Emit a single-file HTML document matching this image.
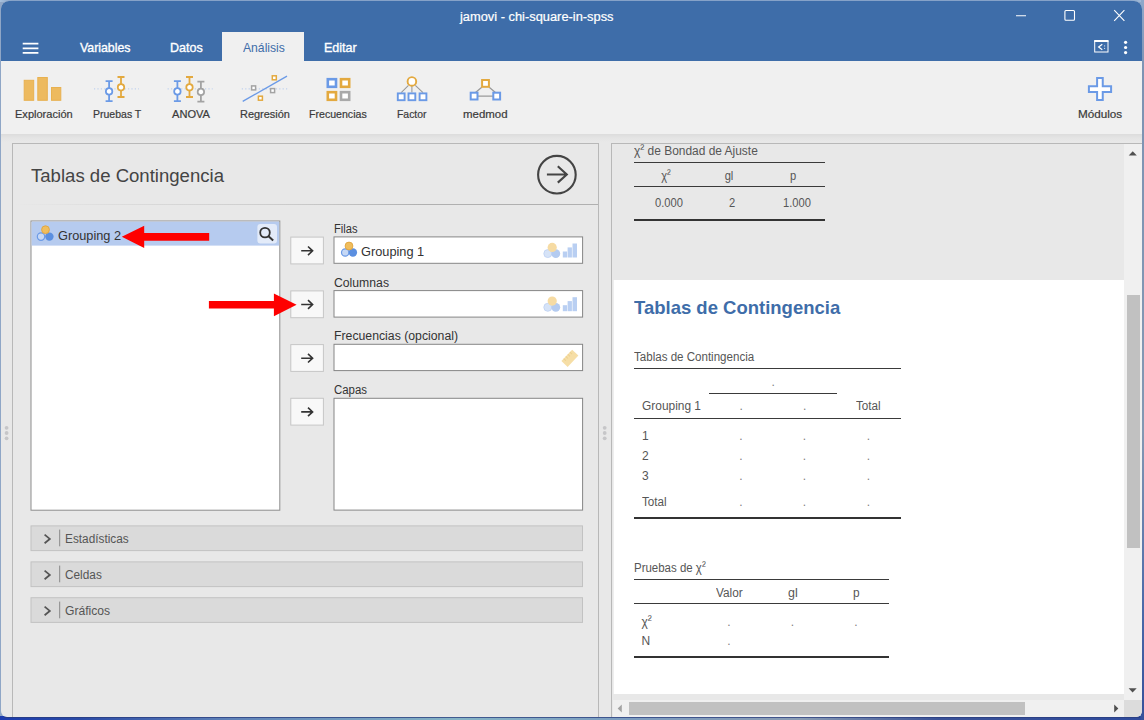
<!DOCTYPE html>
<html lang="es">
<head>
<meta charset="utf-8">
<title>jamovi - chi-square-in-spss</title>
<style>
*{box-sizing:border-box;margin:0;padding:0}
html,body{width:1144px;height:720px;overflow:hidden}
body{position:relative;background:#8fa6c6;font-family:"Liberation Sans",sans-serif;color:#333}
#deskb{position:absolute;left:0;top:716px;width:1144px;height:4px;background:linear-gradient(90deg,#1c3cae 0%,#2a4aa6 7%,#5f82b8 20%,#86b4c6 40%,#7c9cc0 55%,#8a9cb4 70%,#3a5298 82%,#2e4a9c 100%)}
#deskr{position:absolute;left:1141px;top:0;width:3px;height:720px;background:linear-gradient(#8ea8ca 0,#7d93b3 10%,#8398b3 60%,#4a68a8 85%,#35509a 100%)}
#deskline{position:absolute;left:4px;top:717px;width:1136px;height:1px;background:#2a3c7c;opacity:.75}
#desktop{position:absolute;left:0;top:0;width:1144px;height:2px;background:linear-gradient(90deg,#a9c1dc 0,#86a2c8 12px,#86a2c8 1130px,#a9c1dc 1144px)}
#win{position:absolute;left:1px;top:1px;width:1141px;height:716px;background:#e8e8e8;border-radius:8px 8px 6px 6px;overflow:hidden}
#win>div,#win>span,#win>svg{position:absolute}
/* coordinates inside #win are page coords minus 1; use wrapper shift */
#shift{left:-1px;top:-1px;width:1144px;height:720px}
#shift>div,#shift>span,#shift>svg{position:absolute}
#bar{left:0;top:0;width:1144px;height:61px;background:#3e6da9}
#acttab{left:222px;top:32px;width:82px;height:30px;background:#f0f0f0}
#ribbon{left:0;top:61px;width:1144px;height:73px;background:#f0f0f0}
#shadow{left:0;top:134px;width:1144px;height:8px;background:linear-gradient(#dcdcdc,#e4e4e4 50%,#e8e8e8)}
#lp{left:12px;top:143px;width:587px;height:580px;border:1px solid #b8b8b8}
#lpsep{left:13px;top:204px;width:585px;height:1px;background:linear-gradient(90deg,rgba(176,176,176,0) 0,rgba(176,176,176,.22) 110px,rgba(176,176,176,.55) 290px,#b0b0b0 410px)}
#rp{left:611px;top:143px;width:540px;height:580px;border:1px solid #b8b8b8}
#white{left:614px;top:280px;width:510px;height:414px;background:#fff;box-shadow:-1px 0 0 rgba(255,255,255,.25)}
#vsb{left:1124px;top:144px;width:18px;height:556px;background:#f0f0f0}
#vth{left:1126.5px;top:294.5px;width:13px;height:253.5px;background:#c1c1c1}
#hsb{left:613px;top:700px;width:511px;height:17px;background:#f0f0f0}
#hth{left:629px;top:702px;width:396px;height:12.5px;background:#c1c1c1}
#corner{left:1124px;top:700px;width:18px;height:17px;background:#dcdcdc}
.box{background:#fff;border:1px solid #8a8a8a}
.btn{width:34px;height:28px;background:#f8f8f8;border:1px solid #c6c6c6}
.coll{left:31px;width:552px;height:26px;background:#dadada;border:1px solid #c2c2c2}
.hl{height:1px;background:#3a3a3a}
.hl2{height:2px;background:#333}
.t{white-space:nowrap;line-height:1;transform-origin:0 50%}
.t.c{width:80px;text-align:center}
.t i{font-style:normal;position:relative;top:-2px}
</style>
</head>
<body>
<div id="desktop"></div>
<div id="deskb"></div><div id="deskr"></div>
<div id="deskline"></div>
<div id="win"><div id="shift">
<div id="bar"></div>
<div id="acttab"></div>
<div id="ribbon"></div>
<div id="shadow"></div>
<div id="lp"></div>
<div id="lpsep"></div>
<div id="rp"></div>
<div id="white"></div>
<div id="vsb"></div><div id="vth"></div>
<div id="hsb"></div><div id="hth"></div><div id="corner"></div>

<!-- left panel widgets -->
<svg style="left:0;top:0" width="1144" height="720" viewBox="0 0 1144 720">
<rect x="31" y="221" width="248.8" height="289.2" fill="#fff" stroke="#8e8e8e"/>
<rect x="31.6" y="221.6" width="247.6" height="24" fill="#b6cbef"/>
<rect x="257.4" y="224" width="19.6" height="19.4" rx="3" fill="#fff" fill-opacity=".62"/>
<g fill="#f8f8f8" stroke="#c6c6c6">
<rect x="290.8" y="237.1" width="32.6" height="26.8"/>
<rect x="290.8" y="290.9" width="32.6" height="26.8"/>
<rect x="290.8" y="344.6" width="32.6" height="26.8"/>
<rect x="290.8" y="398.3" width="32.6" height="26.8"/>
</g>
<g fill="#fff" stroke="#868686">
<rect x="334" y="236.9" width="248.6" height="26.4"/>
<rect x="334" y="290.6" width="248.6" height="26.5"/>
<rect x="334" y="344.3" width="248.6" height="26.3"/>
<rect x="334" y="398.3" width="248.6" height="111.8"/>
</g>
<g fill="#dadada" stroke="#c2c2c2">
<rect x="31" y="525.9" width="551.5" height="24.7"/>
<rect x="31" y="561.9" width="551.5" height="24.7"/>
<rect x="31" y="597.7" width="551.5" height="24.7"/>
</g>
</svg>

<!-- results tables rules -->
<div class="hl" style="left:633.5px;top:162px;width:191px"></div>
<div class="hl" style="left:633.5px;top:186px;width:191px"></div>
<div class="hl2" style="left:633.5px;top:219px;width:191px"></div>
<div class="hl" style="left:633.5px;top:368px;width:267px"></div>
<div class="hl" style="left:709px;top:393px;width:128px"></div>
<div class="hl" style="left:633.5px;top:418px;width:267px"></div>
<div class="hl2" style="left:633.5px;top:516.5px;width:267px"></div>
<div class="hl" style="left:633.5px;top:579px;width:255px"></div>
<div class="hl" style="left:633.5px;top:603px;width:255px"></div>
<div class="hl2" style="left:633.5px;top:656px;width:255px"></div>

<svg style="left:0;top:0" width="1144" height="720" viewBox="0 0 1144 720" fill="none">
<!-- hamburger -->
<g stroke="#fff" stroke-width="1.7"><path d="M22.7 43.7H38.4M22.7 48.3H38.4M22.7 52.9H38.4"/></g>
<!-- window controls -->
<g stroke="#fff" stroke-width="1.1">
<path d="M1016 15.8H1026"/>
<rect x="1064.9" y="10.5" width="9.6" height="9.8" rx="1"/>
<path d="M1114.2 10.2L1124.4 20.8M1124.4 10.2L1114.2 20.8"/>
</g>
<!-- results toggle icon -->
<g stroke="#fff" fill="none">
<rect x="1094.7" y="41.2" width="13.3" height="10.8" stroke-width="1"/>
<path d="M1094.2 41H1108.5" stroke-width="2"/>
<path d="M1102.3 44.2L1098.6 47L1102.3 49.8" stroke-width="1.2"/>
<path d="M1104.6 45.5v0.9M1104.6 47.9v0.9" stroke-width="1"/>
</g>
<g fill="#fff"><circle cx="1125.6" cy="42.3" r="1.6"/><circle cx="1125.6" cy="47.5" r="1.6"/><circle cx="1125.6" cy="52.6" r="1.6"/></g>

<!-- Exploracion -->
<g fill="#edba5f" stroke="#e8b150" stroke-width="1">
<rect x="24.2" y="80.3" width="9.5" height="20"/>
<rect x="37.8" y="77.5" width="9.5" height="22.8"/>
<rect x="51.5" y="87.5" width="9.3" height="12.8"/>
</g>
<!-- Pruebas T -->

<path d="M94 88.9H139" stroke="#b5cbee" stroke-width="1" stroke-dasharray="1.2 2.2"/>
<g transform="translate(109.1 91.4)" stroke="#6b9ae6" stroke-width="1.8"><path d="M0 -10.3V9.7M-3.5 -10.3H3.5M-3.5 9.7H3.5"/><circle r="3.2" fill="#fff"/></g>
<g transform="translate(121 87.3)" stroke="#e3a93f" stroke-width="1.8"><path d="M0 -10.3V9.7M-3.5 -10.3H3.5M-3.5 9.7H3.5"/><circle r="3.2" fill="#fff"/></g>
<!-- ANOVA -->
<path d="M167.6 88.9H212.7" stroke="#b5cbee" stroke-width="1" stroke-dasharray="1.2 2.2"/>
<g transform="translate(177.4 91.4)" stroke="#6b9ae6" stroke-width="1.8"><path d="M0 -10.3V9.7M-3.5 -10.3H3.5M-3.5 9.7H3.5"/><circle r="3.2" fill="#fff"/></g>
<g transform="translate(189.5 87.3)" stroke="#e3a93f" stroke-width="1.8"><path d="M0 -10.3V9.7M-3.5 -10.3H3.5M-3.5 9.7H3.5"/><circle r="3.2" fill="#fff"/></g>
<g transform="translate(200.9 91.9)" stroke="#a3a3a3" stroke-width="1.8"><path d="M0 -10.3V9.7M-3.5 -10.3H3.5M-3.5 9.7H3.5"/><circle r="3.2" fill="#fff"/></g>
<!-- Regresion -->
<path d="M241.8 88.9H287.7" stroke="#b5cbee" stroke-width="1" stroke-dasharray="1.2 2.2"/>
<path d="M242.7 101.4L287 76.1" stroke="#6b9ae6" stroke-width="1.4"/>
<g stroke-width="1.5" fill="#fff">
<rect x="272.3" y="75.8" width="4" height="4" stroke="#e3a93f"/>
<rect x="258.4" y="96.2" width="4" height="4" stroke="#e3a93f"/>
<rect x="251.6" y="85.9" width="4" height="4" stroke="#a3a3a3"/>
<rect x="270.6" y="88.6" width="4" height="4" stroke="#a3a3a3"/>
</g>
<!-- Frecuencias -->
<g stroke-width="2.6" fill="#fff">
<rect x="327.8" y="79.2" width="8.2" height="7.6" stroke="#6b9ae6"/>
<rect x="341" y="79.2" width="8.2" height="7.6" stroke="#e3a93f"/>
<rect x="327.8" y="92.2" width="8.2" height="7.6" stroke="#e3a93f"/>
<rect x="341" y="92.2" width="8.2" height="7.6" stroke="#a9a9a9"/>
</g>
<!-- Factor -->
<g stroke="#9a9a9a" stroke-width="1.1"><path d="M408.5 85.3L401.2 92.6M411.9 86V92.6M415.3 85.3L423 92.6"/></g>
<circle cx="411.9" cy="81.4" r="4.3" stroke="#e3a93f" stroke-width="1.9" fill="#fff"/>
<g stroke="#6b9ae6" stroke-width="1.9" fill="#fff">
<rect x="397.8" y="93.4" width="6.8" height="6.8"/><rect x="408.5" y="93.4" width="6.8" height="6.8"/><rect x="419.6" y="93.4" width="6.8" height="6.8"/>
</g>
<!-- medmod -->
<g stroke="#9a9a9a" stroke-width="1.3"><path d="M477.5 96.1H493.3M481.8 87.2L475.5 92.4M489.2 87.2L495.4 92.4"/></g>
<rect x="482.1" y="80" width="6.8" height="6.8" stroke="#e3a93f" stroke-width="2" fill="#fff"/>
<g stroke="#6b9ae6" stroke-width="2" fill="#fff"><rect x="470.7" y="92.7" width="6.8" height="6.8"/><rect x="493.3" y="92.7" width="6.8" height="6.8"/></g>
<!-- Modulos plus -->
<path d="M1097.1 78.1H1102.75V86.25H1111.1V91.9H1102.75V100H1097.1V91.9H1088.9V86.25H1097.1Z" stroke="#6b9ae6" stroke-width="2" fill="#fff"/>

<!-- run circle -->
<circle cx="556.9" cy="174.7" r="18.8" stroke="#444" stroke-width="2.1"/>
<path d="M546.9 174.5H566.6M557.8 166.3L566.8 174.5L557.8 182.6" stroke="#444" stroke-width="2.1" stroke-linejoin="miter"/>

<!-- nominal icons -->
<g>
<circle cx="41" cy="236.6" r="3.7" fill="#c6d8f5" stroke="#6b9ae6" stroke-width="1.2"/>
<circle cx="49.4" cy="236.6" r="4.2" fill="#5b8fe0"/>
<circle cx="45.5" cy="229.7" r="3.9" fill="#f0be5e" stroke="#e0a43c" stroke-width=".9"/>
</g>
<g>
<circle cx="345.2" cy="252.5" r="3.7" fill="#c6d8f5" stroke="#6b9ae6" stroke-width="1.2"/>
<circle cx="352.9" cy="252.5" r="4.2" fill="#5b8fe0"/>
<circle cx="349" cy="246" r="3.9" fill="#f0be5e" stroke="#e0a43c" stroke-width=".9"/>
</g>
<!-- faded nominal + ordinal -->
<g>
<circle cx="547.8" cy="253.6" r="4" fill="#d6e3f7" stroke="#bcd0f2" stroke-width=".8"/>
<circle cx="555.8" cy="253.6" r="4.4" fill="#b4cbf0"/>
<circle cx="552.2" cy="247.4" r="4.6" fill="#f6dba3"/>
<rect x="562.8" y="251.5" width="4.3" height="6" fill="#b9cff2"/><rect x="567.6" y="247.4" width="4.3" height="10.1" fill="#b9cff2"/><rect x="572.5" y="243.5" width="4.5" height="14" fill="#b9cff2"/>
</g>
<g transform="translate(0 53.7)">
<circle cx="547.8" cy="253.6" r="4" fill="#d6e3f7" stroke="#bcd0f2" stroke-width=".8"/>
<circle cx="555.8" cy="253.6" r="4.4" fill="#b4cbf0"/>
<circle cx="552.2" cy="247.4" r="4.6" fill="#f6dba3"/>
<rect x="562.8" y="251.5" width="4.3" height="6" fill="#b9cff2"/><rect x="567.6" y="247.4" width="4.3" height="10.1" fill="#b9cff2"/><rect x="572.5" y="243.5" width="4.5" height="14" fill="#b9cff2"/>
</g>
<!-- ruler -->
<g transform="translate(569.9 358.3) rotate(-46.5)">
<rect x="-7.8" y="-4.3" width="15.6" height="8.6" fill="#f6dea6"/>
<path d="M-4.5 -4.3v3M-1.5 -4.3v3M1.5 -4.3v3M4.5 -4.3v3" stroke="#eccf8e" stroke-width="1"/>
</g>
<!-- search -->
<circle cx="265" cy="232.6" r="4.8" stroke="#333" stroke-width="1.8"/>
<path d="M268.5 236.2L273.2 240.4" stroke="#333" stroke-width="2"/>
<!-- button arrows -->
<g stroke="#333" stroke-width="1.6">
<path d="M301.2 250.8H312.5M308 246.5L312.6 250.8L308 255.1"/>
<path d="M301.2 304.5H312.5M308 300.2L312.6 304.5L308 308.8"/>
<path d="M301.2 358.2H312.5M308 353.9L312.6 358.2L308 362.5"/>
<path d="M301.2 411.9H312.5M308 407.6L312.6 411.9L308 416.2"/>
</g>
<!-- chevrons & bars -->
<g stroke="#555" stroke-width="1.8"><path d="M44.6 534.6L49.8 538.9L44.6 543.2"/><path d="M44.6 570.6L49.8 574.9L44.6 579.2"/><path d="M44.6 606.6L49.8 610.9L44.6 615.2"/></g>
<g stroke="#888" stroke-width="1"><path d="M59.7 529.6V546.3M59.7 565.6V582.3M59.7 601.6V618.3"/></g>
<!-- red arrows -->
<g fill="#fe0000">
<path d="M121.8 236.8L144.2 225.7V232.9H209.2V240.7H144.2V248Z"/>
<path d="M296.6 304.7L273.9 293.4V300.9H208.9V308.5H273.9V316.2Z"/>
</g>
<!-- splitter dots -->
<g fill="#c6c6c8"><circle cx="6.6" cy="427.8" r="1.9"/><circle cx="6.6" cy="433" r="1.9"/><circle cx="6.6" cy="438.3" r="1.9"/>
<circle cx="604.7" cy="427.8" r="1.9"/><circle cx="604.7" cy="433" r="1.9"/><circle cx="604.7" cy="438.3" r="1.9"/></g>
<!-- scrollbar arrows -->
<g fill="#505050">
<path d="M1128.7 155.4L1132.75 151.2L1136.8 155.4Z"/>
<path d="M1128.6 688.3L1132.6 692.4L1136.7 688.3Z"/>
<path d="M1114.2 704.4L1118.3 708.5L1114.2 712.6Z"/>
</g>
<path d="M621.8 704.4L617.7 708.5L621.8 712.6Z" fill="#a3a3a3"/>
</svg>

<span class="t" style="left:459.6px;top:11.1px;font-size:12px;color:#fff;-webkit-text-stroke:0.2px #fff;transform:scaleX(1.0706);">jamovi - chi-square-in-spss</span>
<span class="t" style="left:80.1px;top:40.9px;font-size:13px;color:#fff;-webkit-text-stroke:0.35px #fff;transform:scaleX(0.9468);">Variables</span>
<span class="t" style="left:170.3px;top:40.9px;font-size:13px;color:#fff;-webkit-text-stroke:0.35px #fff;transform:scaleX(0.9626);">Datos</span>
<span class="t" style="left:243.0px;top:40.7px;font-size:13px;color:#3e6da9;transform:scaleX(0.9353);">Análisis</span>
<span class="t" style="left:324.3px;top:40.7px;font-size:13px;color:#fff;-webkit-text-stroke:0.35px #fff;transform:scaleX(0.9626);">Editar</span>
<span class="t" style="left:14.7px;top:108.9px;font-size:11px;color:#3a3a3a;-webkit-text-stroke:0.2px #3a3a3a;transform:scaleX(1.0038);">Exploración</span>
<span class="t" style="left:93.1px;top:108.9px;font-size:11px;color:#3a3a3a;-webkit-text-stroke:0.2px #3a3a3a;transform:scaleX(0.9553);">Pruebas T</span>
<span class="t" style="left:171.8px;top:108.9px;font-size:11px;color:#3a3a3a;-webkit-text-stroke:0.2px #3a3a3a;transform:scaleX(1.0079);">ANOVA</span>
<span class="t" style="left:239.8px;top:108.9px;font-size:11px;color:#3a3a3a;-webkit-text-stroke:0.2px #3a3a3a;transform:scaleX(0.9952);">Regresión</span>
<span class="t" style="left:309.3px;top:108.9px;font-size:11px;color:#3a3a3a;-webkit-text-stroke:0.2px #3a3a3a;transform:scaleX(0.9629);">Frecuencias</span>
<span class="t" style="left:397.0px;top:108.9px;font-size:11px;color:#3a3a3a;-webkit-text-stroke:0.2px #3a3a3a;transform:scaleX(0.9459);">Factor</span>
<span class="t" style="left:463.3px;top:108.9px;font-size:11px;color:#3a3a3a;-webkit-text-stroke:0.2px #3a3a3a;transform:scaleX(1.0398);">medmod</span>
<span class="t" style="left:1077.5px;top:108.9px;font-size:11px;color:#3a3a3a;-webkit-text-stroke:0.2px #3a3a3a;transform:scaleX(1.0631);">Módulos</span>
<span class="t" style="left:31.0px;top:166.8px;font-size:18.3px;color:#444;transform:scaleX(1.0155);">Tablas de Contingencia</span>
<span class="t" style="left:58.0px;top:229.0px;font-size:13px;color:#333;transform:scaleX(0.9794);">Grouping 2</span>
<span class="t" style="left:334.0px;top:223.0px;font-size:12px;color:#333;transform:scaleX(0.9273);">Filas</span>
<span class="t" style="left:360.6px;top:244.6px;font-size:13px;color:#333;transform:scaleX(0.9825);">Grouping 1</span>
<span class="t" style="left:334.0px;top:277.1px;font-size:12px;color:#333;transform:scaleX(1.0179);">Columnas</span>
<span class="t" style="left:334.0px;top:330.0px;font-size:12px;color:#333;transform:scaleX(1.0215);">Frecuencias (opcional)</span>
<span class="t" style="left:334.0px;top:383.5px;font-size:12px;color:#333;transform:scaleX(0.9514);">Capas</span>
<span class="t" style="left:65.3px;top:533.0px;font-size:12px;color:#555;transform:scaleX(0.9845);">Estadísticas</span>
<span class="t" style="left:65.3px;top:569.0px;font-size:12px;color:#555;transform:scaleX(0.9850);">Celdas</span>
<span class="t" style="left:65.3px;top:605.0px;font-size:12px;color:#555;transform:scaleX(1.0115);">Gráficos</span>
<span class="t" style="left:633.5px;top:144.8px;font-size:12px;color:#565656;transform:scaleX(0.9951);">χ<i>²</i> de Bondad de Ajuste</span>
<span class="t" style="left:634.1px;top:299.3px;font-size:18.6px;color:#3e6da9;font-weight:700;transform:scaleX(0.9946);">Tablas de Contingencia</span>
<span class="t" style="left:634.0px;top:351.1px;font-size:12px;color:#565656;transform:scaleX(0.9634);">Tablas de Contingencia</span>
<span class="t" style="left:641.5px;top:399.6px;font-size:12px;color:#565656;transform:scaleX(0.9937);">Grouping 1</span>
<span class="t" style="left:856.0px;top:399.6px;font-size:12px;color:#565656;transform:scaleX(0.9740);">Total</span>
<span class="t" style="left:642.0px;top:430.0px;font-size:12px;color:#565656;">1</span>
<span class="t" style="left:642.0px;top:449.6px;font-size:12px;color:#565656;">2</span>
<span class="t" style="left:642.0px;top:470.0px;font-size:12px;color:#565656;">3</span>
<span class="t" style="left:642.0px;top:495.5px;font-size:12px;color:#565656;transform:scaleX(0.9740);">Total</span>
<span class="t" style="left:634.0px;top:562.3px;font-size:12px;color:#565656;transform:scaleX(0.9558);">Pruebas de χ<i>²</i></span>
<span class="t" style="left:715.7px;top:586.7px;font-size:12px;color:#565656;transform:scaleX(0.9843);">Valor</span>
<span class="t" style="left:788.3px;top:586.7px;font-size:12px;color:#565656;transform:scaleX(1.0381);">gl</span>
<span class="t" style="left:853.4px;top:586.7px;font-size:12px;color:#565656;transform:scaleX(0.9869);">p</span>
<span class="t" style="left:641.5px;top:615.8px;font-size:12px;color:#565656;">χ<i>²</i></span>
<span class="t" style="left:641.5px;top:634.9px;font-size:12px;color:#565656;">N</span>
<span class="t c" style="left:625.6px;top:169.8px;font-size:12px;color:#565656;transform:scaleX(.93);transform-origin:50% 50%;">χ<i>²</i></span>
<span class="t c" style="left:689.0px;top:169.8px;font-size:12px;color:#565656;transform:scaleX(.93);transform-origin:50% 50%;">gl</span>
<span class="t c" style="left:753.0px;top:169.8px;font-size:12px;color:#565656;transform:scaleX(.93);transform-origin:50% 50%;">p</span>
<span class="t c" style="left:629.0px;top:197.3px;font-size:12px;color:#565656;transform:scaleX(.93);transform-origin:50% 50%;">0.000</span>
<span class="t c" style="left:691.7px;top:197.3px;font-size:12px;color:#565656;transform:scaleX(.93);transform-origin:50% 50%;">2</span>
<span class="t c" style="left:756.7px;top:197.3px;font-size:12px;color:#565656;transform:scaleX(.93);transform-origin:50% 50%;">1.000</span>
<span class="t c" style="left:733.1px;top:376.3px;font-size:12px;color:#808080;">.</span>
<span class="t c" style="left:701.1px;top:400.1px;font-size:12px;color:#808080;">.</span>
<span class="t c" style="left:764.6px;top:400.1px;font-size:12px;color:#808080;">.</span>
<span class="t c" style="left:701.0px;top:429.8px;font-size:12px;color:#808080;">.</span>
<span class="t c" style="left:764.5px;top:429.8px;font-size:12px;color:#808080;">.</span>
<span class="t c" style="left:828.3px;top:429.8px;font-size:12px;color:#808080;">.</span>
<span class="t c" style="left:701.0px;top:449.8px;font-size:12px;color:#808080;">.</span>
<span class="t c" style="left:764.5px;top:449.8px;font-size:12px;color:#808080;">.</span>
<span class="t c" style="left:828.3px;top:449.8px;font-size:12px;color:#808080;">.</span>
<span class="t c" style="left:701.0px;top:469.8px;font-size:12px;color:#808080;">.</span>
<span class="t c" style="left:764.5px;top:469.8px;font-size:12px;color:#808080;">.</span>
<span class="t c" style="left:828.3px;top:469.8px;font-size:12px;color:#808080;">.</span>
<span class="t c" style="left:701.0px;top:495.8px;font-size:12px;color:#808080;">.</span>
<span class="t c" style="left:764.5px;top:495.8px;font-size:12px;color:#808080;">.</span>
<span class="t c" style="left:828.3px;top:495.8px;font-size:12px;color:#808080;">.</span>
<span class="t c" style="left:688.8px;top:615.8px;font-size:12px;color:#808080;">.</span>
<span class="t c" style="left:752.3px;top:615.8px;font-size:12px;color:#808080;">.</span>
<span class="t c" style="left:816.0px;top:615.8px;font-size:12px;color:#808080;">.</span>
<span class="t c" style="left:688.8px;top:634.8px;font-size:12px;color:#808080;">.</span>
</div></div>
</body>
</html>
